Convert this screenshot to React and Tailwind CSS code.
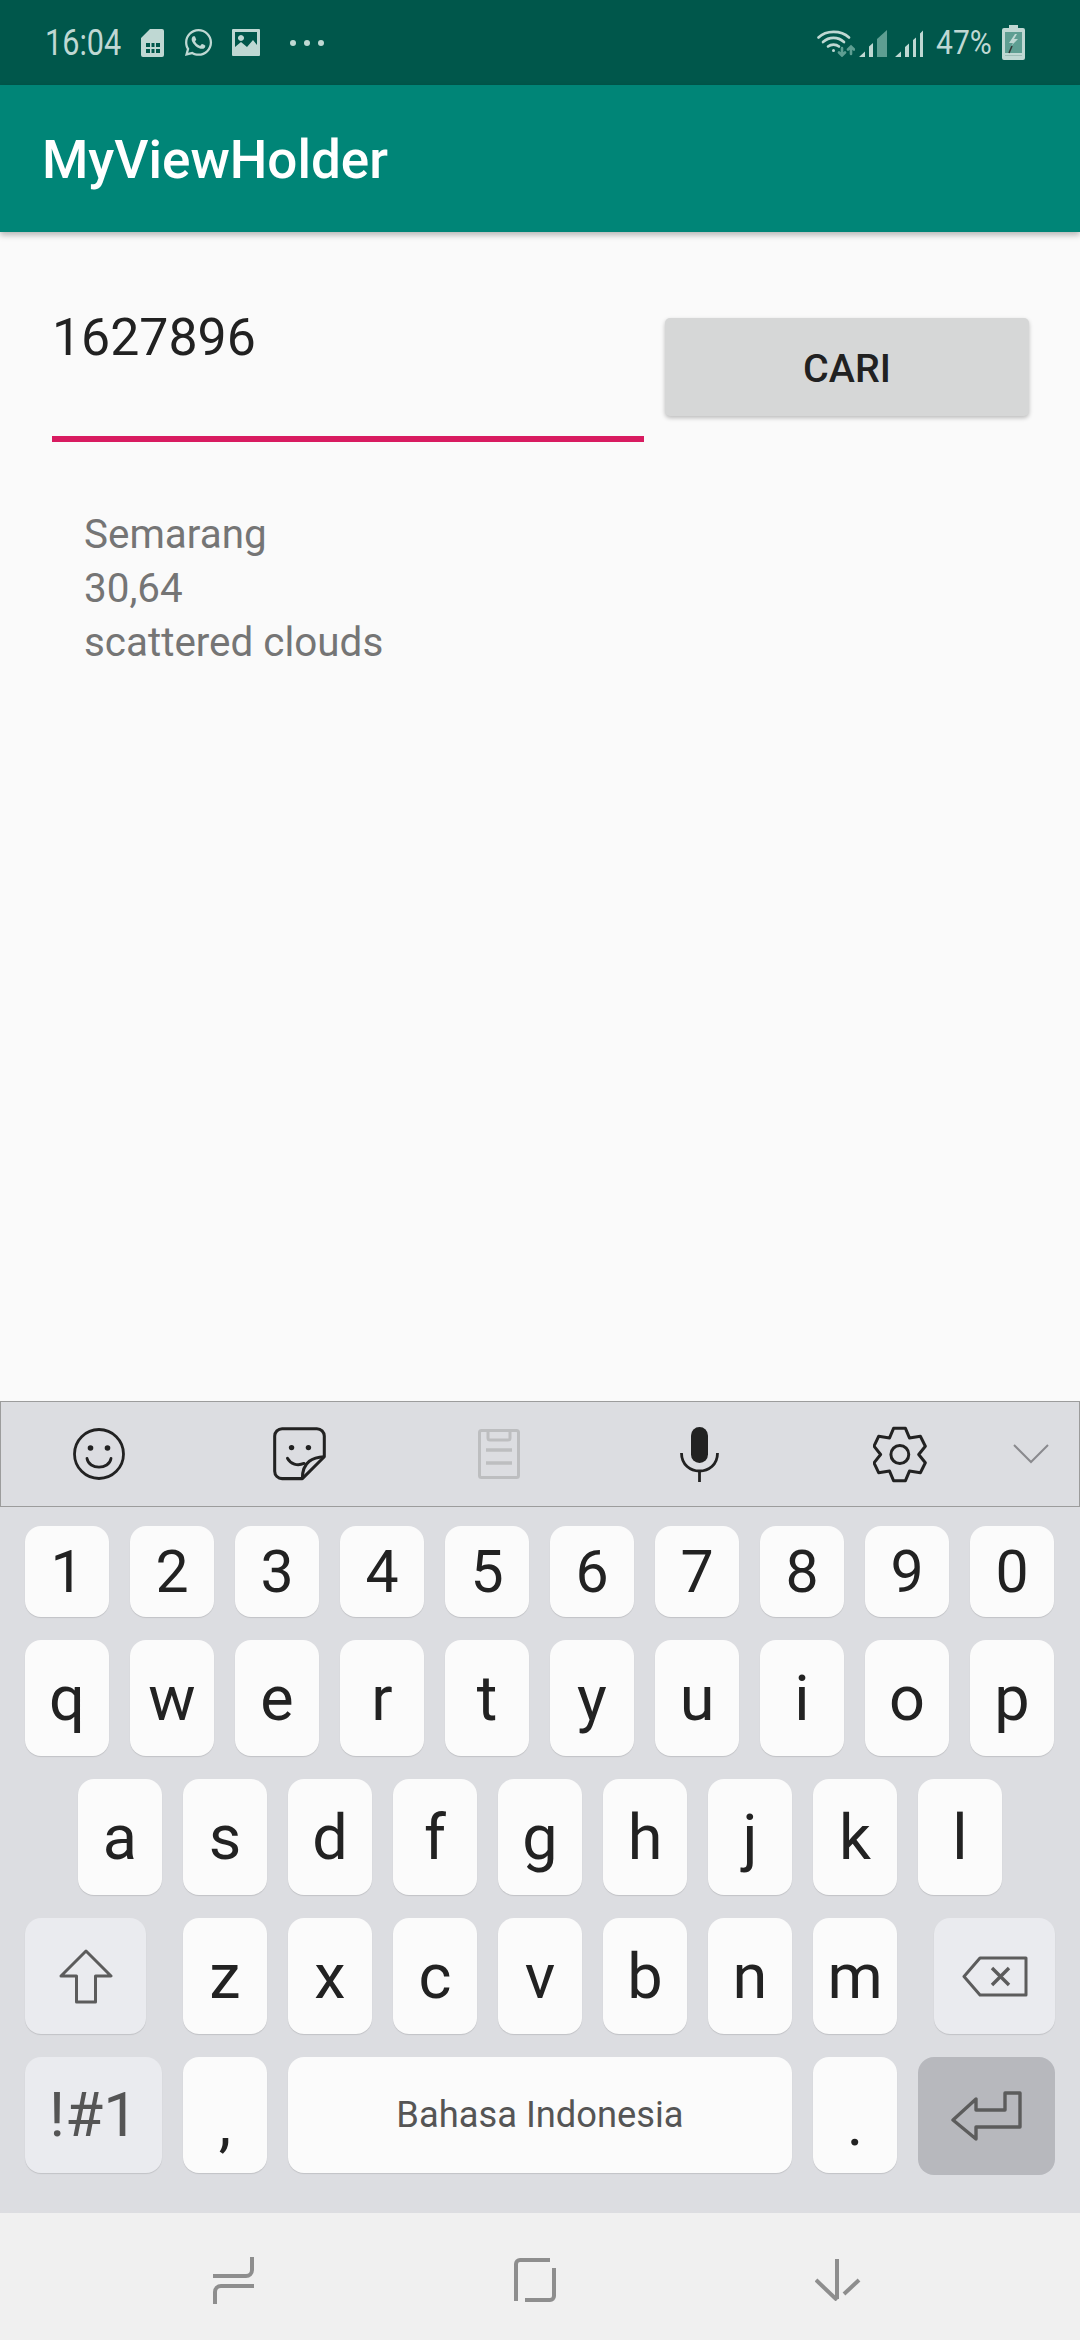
import { FaWhatsapp } from 'react-icons/fa';

const roboto = { fontFamily: 'Roboto, sans-serif' };

const rowNumbers = ['1', '2', '3', '4', '5', '6', '7', '8', '9', '0'];
const rowTop = ['q', 'w', 'e', 'r', 't', 'y', 'u', 'i', 'o', 'p'];
const rowMiddle = ['a', 's', 'd', 'f', 'g', 'h', 'j', 'k', 'l'];
const rowBottom = ['z', 'x', 'c', 'v', 'b', 'n', 'm'];

function Key({ label }) {
    return (
        <div className="w-[84px] h-[116px] flex items-center justify-center rounded-[16px] bg-[#FBFBFB] shadow-[0_1px_1px_rgba(0,0,0,0.12)] text-[63px] leading-none text-[#222222]">
            {label}
        </div>
    );
}

function StatusIcons() {
    return (
        <div className="flex items-center text-[#BFD8D3]">
            <svg width="23" height="28" viewBox="0 0 23 28" className="ml-[23px]">
                <path fillRule="evenodd" fill="currentColor" d="M9 0H21a2 2 0 0 1 2 2V26a2 2 0 0 1-2 2H2a2 2 0 0 1-2-2V9ZM5 14v4h4v-4ZM10.500 14v4h3v-4ZM15 14v4h4v-4ZM5 20v4h4v-4ZM10.500 20v4h3v-4ZM15 20v4h4v-4Z" />
            </svg>
            <FaWhatsapp className="ml-[19px] w-[31px] h-[31px]" />
            <svg width="28" height="27" viewBox="0 0 28 27" className="ml-[18px]">
                <path fillRule="evenodd" fill="currentColor" d="M1 0H27a1 1 0 0 1 1 1V26a1 1 0 0 1-1 1H1a1 1 0 0 1-1-1V1a1 1 0 0 1 1-1ZM3 3V18L9 13 15 18 21 11 25 16V3ZM9 6a3 3 0 1 1-.01 0Z" />
            </svg>
            <div className="ml-[30px] flex items-center gap-[8px]">
                <div className="w-[6px] h-[6px] rounded-full bg-[#BFD8D3]" />
                <div className="w-[6px] h-[6px] rounded-full bg-[#BFD8D3]" />
                <div className="w-[6px] h-[6px] rounded-full bg-[#BFD8D3]" />
            </div>
        </div>
    );
}

function SignalIcons() {
    return (
        <div className="flex items-center text-[#BFD8D3]">
            <svg width="38" height="28" viewBox="0 0 38 28" fill="none" stroke="currentColor" strokeWidth="2.600" strokeLinecap="round">
                <path d="M1.500 8.500C9 1 24 1 32 8.500" />
                <path d="M6 13C12 7.500 21 7.500 27 13" />
                <path d="M11 17.500C14 15 19 15 22 17.500" />
                <circle cx="16.500" cy="21.500" r="1.500" fill="currentColor" stroke="none" />
                <path d="M25 19V26M22 23.500L25 26.500 28 23.500" stroke="#5E9E92" />
                <path d="M34 25V18M31 20.500L34 17.500 37 20.500" stroke="#5E9E92" />
            </svg>
            <svg width="28" height="28" viewBox="0 0 28 28" className="ml-[4px]">
                <path fill="currentColor" d="M0 28 6 22.500V28ZM10 17.500 14 14V28H10Z" />
                <path fill="#5E9E92" d="M18 10 28 1V28H18Z" />
            </svg>
            <svg width="28" height="28" viewBox="0 0 28 28" className="ml-[8px]">
                <path fill="currentColor" d="M0 28 6 22.500V28ZM10 18 14 14.500V28H10ZM18 11 21 8.500V28H18ZM25 4.500 28 1.500V28H25Z" />
            </svg>
        </div>
    );
}

function BatteryIcon() {
    return (
        <svg width="23" height="35" viewBox="0 0 23 35">
            <path fill="#BFD8D3" d="M7 0H16V3H21a2 2 0 0 1 2 2V33a2 2 0 0 1-2 2H2a2 2 0 0 1-2-2V5a2 2 0 0 1 2-2H7Z" />
            <rect x="3" y="7" width="17" height="21" fill="#5E9E92" />
            <path fill="#BFD8D3" d="M13 9 7 18H11L9 21 16 14H12L15 9Z" />
            <path stroke="#333333" strokeWidth="1.500" d="M10 21 7 28" />
            <rect x="3" y="30" width="17" height="1" fill="#9DBDB7" />
        </svg>
    );
}

function Toolbar() {
    return (
        <div className="h-[106px] flex items-center bg-[#DCDDE1] border-[1.500px] border-[#9C9C9C] text-[#222222]">
            <svg width="52" height="52" viewBox="0 0 52 52" fill="none" stroke="currentColor" strokeWidth="2.800" className="ml-[72px]">
                <circle cx="26" cy="26" r="24.500" />
                <circle cx="17.500" cy="20" r="2.800" fill="currentColor" stroke="none" />
                <circle cx="34.500" cy="20" r="2.800" fill="currentColor" stroke="none" />
                <path d="M14 30.500C16 42 36 42 38 30.500" strokeLinecap="round" />
            </svg>
            <svg width="54" height="54" viewBox="70 50 160 160" fill="none" stroke="currentColor" strokeWidth="9" strokeLinejoin="round" className="ml-[148px]">
                <path d="M157 203H97a22 22 0 0 1-22-22V77a22 22 0 0 1 22-22H200a22 22 0 0 1 22 22V138Z" />
                <path d="M222 138C190 140 157 150 157 203" />
                <circle cx="125" cy="111" r="8" fill="currentColor" stroke="none" />
                <circle cx="175" cy="111" r="8" fill="currentColor" stroke="none" />
                <path d="M113 143C122 160 142 166 162 158" strokeLinecap="round" />
            </svg>
            <svg width="42" height="50" viewBox="0 0 42 50" fill="none" stroke="#BDBEC0" strokeWidth="3" className="ml-[151px]">
                <rect x="1.500" y="1.500" width="39" height="47" rx="2" />
                <path d="M10 2V9a2 2 0 0 0 2 2H30a2 2 0 0 0 2-2V2" />
                <path d="M8 21H34M8 34H34" strokeWidth="3.500" />
            </svg>
            <svg width="39" height="55" viewBox="0 0 39 55" fill="none" stroke="currentColor" strokeWidth="2.800" className="ml-[160px]">
                <rect x="11" y="0" width="17" height="36" rx="8.500" fill="currentColor" stroke="none" />
                <path d="M1.500 26C1.500 50 37.500 50 37.500 26" />
                <path d="M19.500 44V55" />
            </svg>
            <svg width="54" height="57" viewBox="100 45 163 170" fill="none" stroke="currentColor" strokeWidth="9" strokeLinejoin="round" className="ml-[154px]">
                <path d="M162 51H198L210 80 243 75 258 105 238 130 258 155 243 185 210 180 198 209H162L150 180 117 185 103 155 123 130 103 105 117 75 150 80Z" />
                <circle cx="181" cy="130" r="27" />
            </svg>
            <svg width="36" height="20" viewBox="0 0 36 20" fill="none" stroke="#8A8A8E" strokeWidth="2" className="ml-[86px]">
                <path d="M1 1 18 18 35 1" />
            </svg>
        </div>
    );
}

function Keyboard() {
    return (
        <div className="h-[706px] bg-[#DCDDE1] flex flex-col pt-[19px]">
            <div className="flex gap-[21px] pl-[25px]">
                {rowNumbers.map((k) => (
                    <div key={k} className="w-[84px] h-[91px] flex items-center justify-center rounded-[16px] bg-[#FBFBFB] shadow-[0_1px_1px_rgba(0,0,0,0.12)] text-[59px] leading-none text-[#222222]">
                        {k}
                    </div>
                ))}
            </div>
            <div className="flex gap-[21px] pl-[25px] mt-[23px]">
                {rowTop.map((k) => (
                    <Key key={k} label={k} />
                ))}
            </div>
            <div className="flex gap-[21px] pl-[78px] mt-[23px]">
                {rowMiddle.map((k) => (
                    <Key key={k} label={k} />
                ))}
            </div>
            <div className="flex pl-[25px] mt-[23px]">
                <div className="w-[121px] h-[116px] flex items-center justify-center rounded-[16px] bg-[#EAEBEF] shadow-[0_1px_1px_rgba(0,0,0,0.12)]">
                    <svg width="54" height="55" viewBox="0 0 54 55" fill="none" stroke="#5C5C5C" strokeWidth="3" strokeLinejoin="round">
                        <path d="M27 2 52 27H36.500V53H17.500V27H2Z" />
                    </svg>
                </div>
                <div className="ml-[37px] flex gap-[21px]">
                    {rowBottom.map((k) => (
                        <Key key={k} label={k} />
                    ))}
                </div>
                <div className="ml-[37px] w-[121px] h-[116px] flex items-center justify-center rounded-[16px] bg-[#EAEBEF] shadow-[0_1px_1px_rgba(0,0,0,0.12)]">
                    <svg width="66" height="41" viewBox="0 0 66 41" fill="none" stroke="#5C5C5C" strokeWidth="3" strokeLinejoin="round">
                        <path d="M18 2H64V39H18L2 20.500Z" />
                        <path d="M30 12 47 29M47 12 30 29" strokeWidth="3.400" />
                    </svg>
                </div>
            </div>
            <div className="flex items-start gap-[21px] pl-[25px] mt-[23px]">
                <div className="w-[137px] h-[116px] flex items-center justify-center rounded-[16px] bg-[#EAEBEF] shadow-[0_1px_1px_rgba(0,0,0,0.12)] text-[62px] leading-none text-[#555555]">
                    !#1
                </div>
                <div className="w-[84px] h-[116px] flex items-center justify-center rounded-[16px] bg-[#FBFBFB] shadow-[0_1px_1px_rgba(0,0,0,0.12)] pt-[16px] text-[63px] leading-none text-[#222222]">
                    ,
                </div>
                <div className="w-[504px] h-[116px] flex items-center justify-center rounded-[16px] bg-[#FBFBFB] shadow-[0_1px_1px_rgba(0,0,0,0.12)] text-[36.300px] leading-none text-[#555555]">
                    Bahasa Indonesia
                </div>
                <div className="w-[84px] h-[116px] flex items-center justify-center rounded-[16px] bg-[#FBFBFB] shadow-[0_1px_1px_rgba(0,0,0,0.12)] pt-[16px] text-[63px] leading-none text-[#222222]">
                    .
                </div>
                <div className="w-[137px] h-[118px] flex items-center justify-center rounded-[16px] bg-[#B7B8BD]">
                    <svg width="71" height="50" viewBox="0 0 71 50" fill="none" stroke="#5C5C5C" strokeWidth="3.400" strokeLinejoin="round">
                        <path d="M2 29 25 8V19H54V2H69V36H25V48Z" />
                    </svg>
                </div>
            </div>
        </div>
    );
}

function NavBar() {
    return (
        <div className="h-[127px] bg-[#F0F0F0] flex items-center text-[#8E8E8E]">
            <svg width="41" height="47" viewBox="0 0 41 47" fill="none" stroke="currentColor" strokeWidth="4" className="ml-[213px] mt-[7px]">
                <path d="M0 19H33a6 6 0 0 0 6-6V0" />
                <path d="M41 29H8a6 6 0 0 0-6 6V47" />
            </svg>
            <svg width="42" height="44" viewBox="0 0 42 44" fill="none" stroke="currentColor" strokeWidth="4" className="ml-[260px] mt-[6px]">
                <path d="M2 43V6a4 4 0 0 1 4-4H36" />
                <path d="M40 10V38a4 4 0 0 1-4 4H11" />
            </svg>
            <svg width="46" height="42" viewBox="0 0 46 42" fill="none" stroke="currentColor" strokeWidth="4" className="ml-[259px] mt-[6px]">
                <path d="M22 0V40" />
                <path d="M1 21 22 41" />
                <path d="M29 35 44 21" />
            </svg>
        </div>
    );
}

export default function App() {
    return (
        <div className="w-[1080px] h-[2340px] flex flex-col bg-[#FAFAFA] overflow-hidden" style={roboto}>
            <div className="h-[85px] bg-[#00574B] flex items-center justify-between pl-[45px] pr-[55px]">
                <div className="flex items-center">
                    <div className="w-[73px] text-[36px] leading-none text-[#BFD8D3] scale-x-[0.85] origin-left whitespace-nowrap">16:04</div>
                    <StatusIcons />
                </div>
                <div className="flex items-center">
                    <SignalIcons />
                    <div className="ml-[13px] w-[54px] text-[33px] leading-none text-[#BFD8D3] scale-x-[0.91] origin-left whitespace-nowrap">47%</div>
                    <div className="ml-[12px]">
                        <BatteryIcon />
                    </div>
                </div>
            </div>

            <div className="relative z-10 h-[147px] bg-[#008577] flex items-center pl-[42px] pt-[4px] shadow-[0_3px_6px_rgba(0,0,0,0.28)]">
                <h1 className="text-[53px] font-medium leading-none text-white">MyViewHolder</h1>
            </div>

            <div className="flex-1">
                <div className="flex items-start">
                    <div className="ml-[52px] w-[592px] mt-[76px]">
                        <div className="text-[51.800px] leading-[60px] text-[#212121]">1627896</div>
                        <div className="mt-[68px] h-[6px] bg-[#D81B60]" />
                    </div>
                    <button className="ml-[21px] mt-[86px] w-[364px] h-[98px] rounded-[5px] bg-[#D6D7D7] shadow-[0_2px_4px_rgba(0,0,0,0.25)] pt-[4px] text-[39.400px] font-medium leading-none text-[#212121]">
                        CARI
                    </button>
                </div>
                <div className="mt-[66px] pl-[84px] text-[40.400px] leading-[54px] text-[#757575]">
                    <div>Semarang</div>
                    <div>30,64</div>
                    <div>scattered clouds</div>
                </div>
            </div>

            <Toolbar />
            <Keyboard />
            <NavBar />
        </div>
    );
}
